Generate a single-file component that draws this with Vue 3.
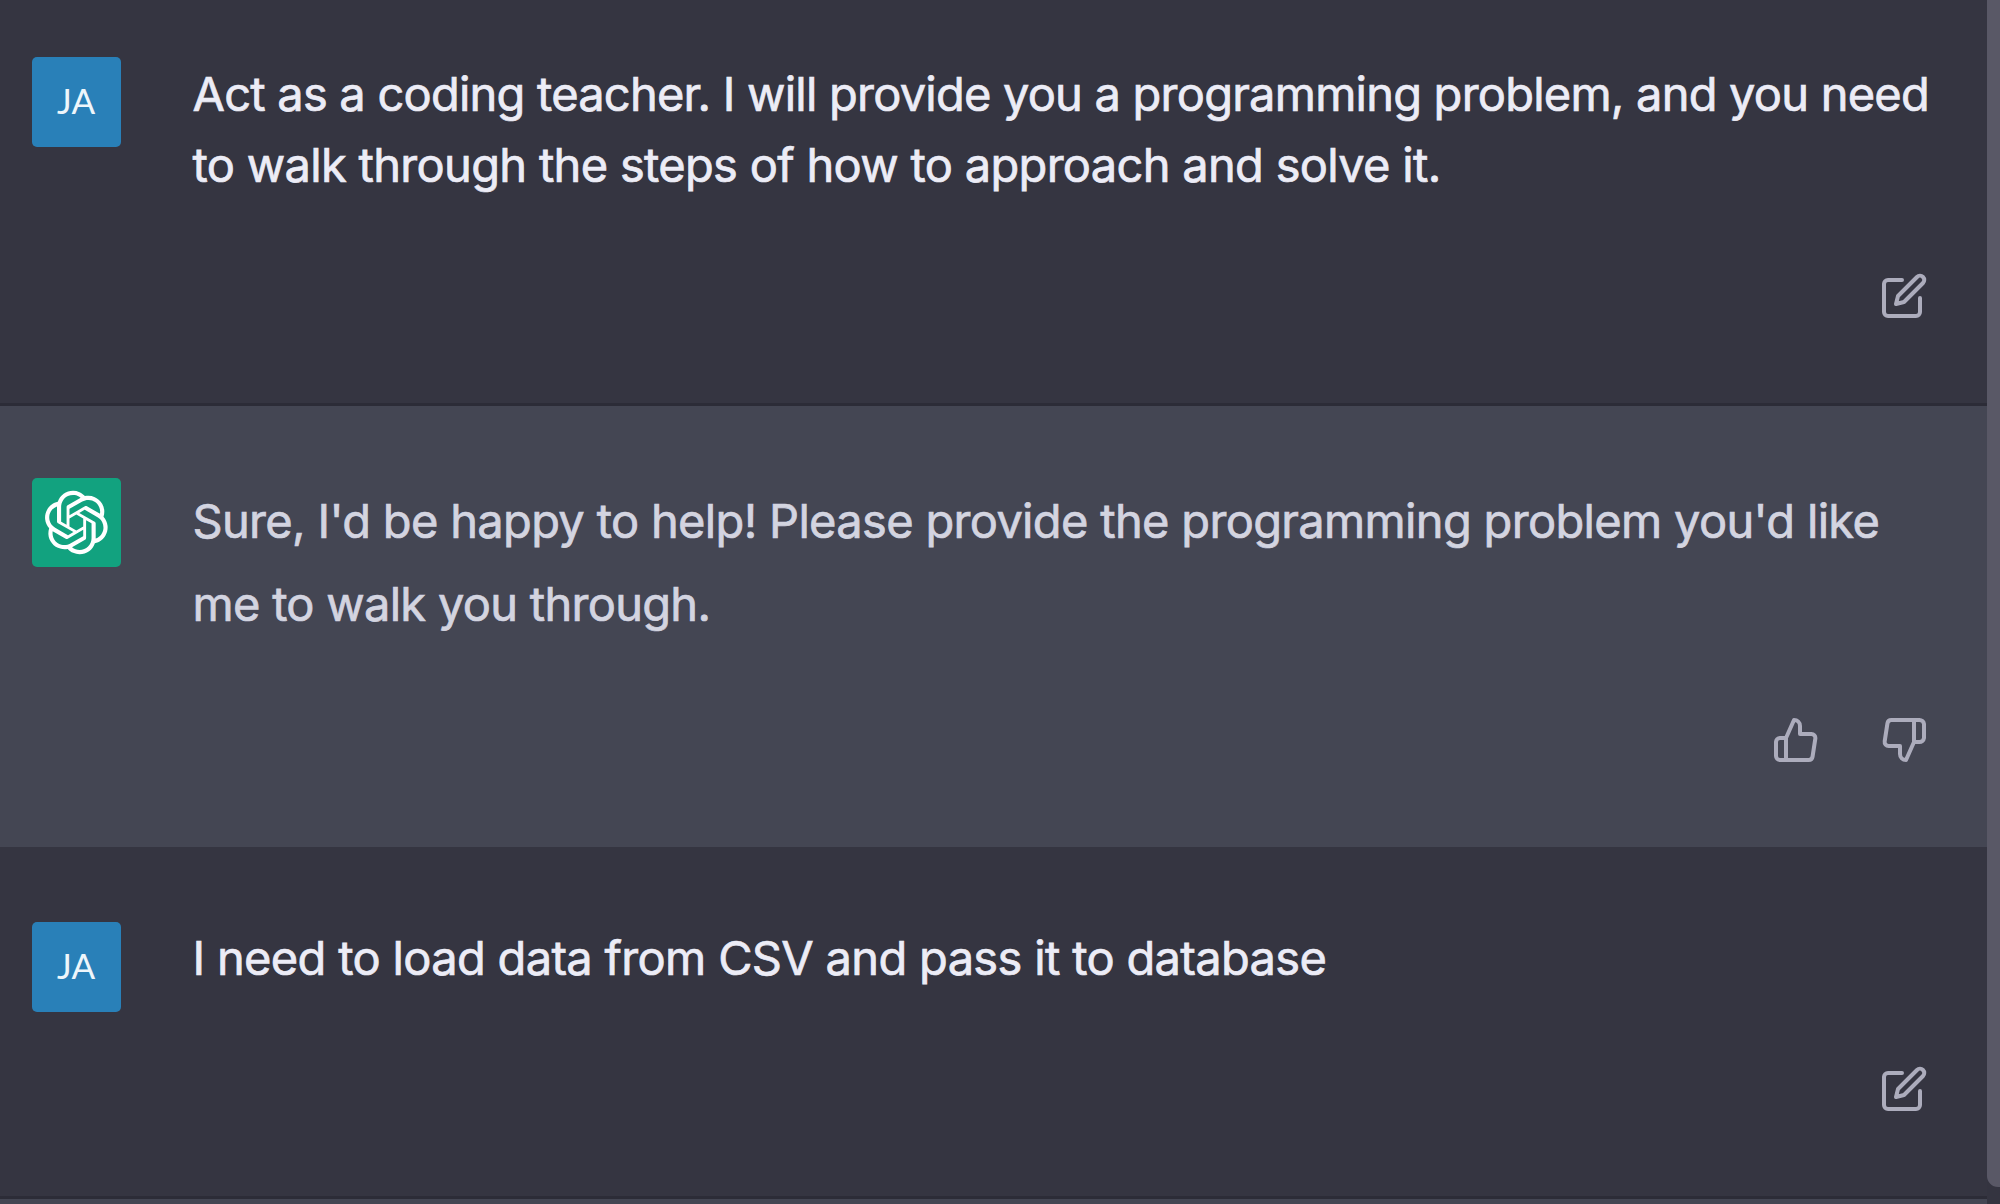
<script setup>
const messages = [
  {
    id: 1,
    role: 'user',
    lines: [
      { text: 'Act as a coding teacher. I will provide you a programming problem, and you need', spacing: -0.775 },
      { text: 'to walk through the steps of how to approach and solve it.', spacing: -0.69 },
    ],
  },
  {
    id: 2,
    role: 'assistant',
    lines: [
      { text: "Sure, I'd be happy to help! Please provide the programming problem you'd like", spacing: -0.67 },
      { text: 'me to walk you through.', spacing: -0.72 },
    ],
  },
  {
    id: 3,
    role: 'user last',
    lines: [{ text: 'I need to load data from CSV and pass it to database', spacing: -0.67 }],
  },
]
</script>

<template>
  <div class="page">
    <main class="chat">
      <section v-for="m in messages" :key="m.id" class="message" :class="m.role">
        <div class="avatar">
          <svg v-if="m.role === 'assistant'" width="65" height="65" viewBox="0 0 41 41" fill="currentColor">
            <path d="M37.5324 16.8707C37.9808 15.5241 38.1363 14.0974 37.9886 12.6859C37.8409 11.2744 37.3934 9.91076 36.676 8.68622C35.6126 6.83404 33.9882 5.3676 32.0373 4.4985C30.0864 3.62941 27.9098 3.40259 25.8215 3.85078C24.8796 2.7893 23.7219 1.94125 22.4257 1.36341C21.1295 0.785575 19.7249 0.491269 18.3058 0.500197C16.1708 0.495044 14.0893 1.16803 12.3614 2.42214C10.6335 3.67624 9.34853 5.44666 8.6917 7.47815C7.30085 7.76286 5.98686 8.3414 4.8377 9.17505C3.68854 10.0087 2.73073 11.0782 2.02839 12.312C0.956464 14.1591 0.498905 16.2988 0.721698 18.4228C0.944492 20.5467 1.83612 22.5449 3.268 24.1293C2.81966 25.4759 2.66413 26.9026 2.81182 28.3141C2.95951 29.7256 3.40701 31.0892 4.12437 32.3138C5.18791 34.1659 6.8123 35.6322 8.76321 36.5013C10.7141 37.3704 12.8907 37.5973 14.9789 37.1492C15.9208 38.2107 17.0786 39.0587 18.3747 39.6366C19.6709 40.2144 21.0755 40.5087 22.4946 40.4998C24.6307 40.5054 26.7133 39.8321 28.4418 38.5772C30.1704 37.3223 31.4556 35.5506 32.1119 33.5179C33.5027 33.2332 34.8167 32.6547 35.9659 31.821C37.115 30.9874 38.0728 29.9178 38.7752 28.684C39.8458 26.8371 40.3023 24.6979 40.0789 22.5748C39.8556 20.4517 38.9639 18.4544 37.5324 16.8707ZM22.4978 37.8849C20.7443 37.8874 19.0459 37.2733 17.6994 36.1501C17.7601 36.117 17.8666 36.0586 17.936 36.0161L25.9004 31.4156C26.1003 31.3019 26.2663 31.137 26.3813 30.9378C26.4964 30.7386 26.5563 30.5124 26.5549 30.2825V19.0542L29.9213 20.998C29.9389 21.0068 29.9541 21.0198 29.9656 21.0359C29.977 21.052 29.9842 21.0707 29.9867 21.0902V30.3889C29.9842 32.375 29.1946 34.2791 27.7909 35.6841C26.3872 37.0892 24.4838 37.8806 22.4978 37.8849ZM6.39227 31.0064C5.51397 29.4888 5.19742 27.7107 5.49804 25.9832C5.55718 26.0187 5.66048 26.0818 5.73461 26.1244L13.699 30.7248C13.8975 30.8408 14.1233 30.902 14.3532 30.902C14.583 30.902 14.8088 30.8408 15.0073 30.7248L24.731 25.1103V28.9979C24.7321 29.0177 24.7283 29.0376 24.7199 29.0556C24.7115 29.0736 24.6988 29.0893 24.6829 29.1012L16.6317 33.7497C14.9096 34.7416 12.8643 35.0097 10.9447 34.4954C9.02506 33.9811 7.38785 32.7263 6.39227 31.0064ZM4.29707 13.6194C5.17156 12.0998 6.55279 10.9364 8.19885 10.3327C8.19885 10.4013 8.19491 10.5228 8.19491 10.6071V19.808C8.19351 20.0378 8.25334 20.2638 8.36823 20.4629C8.48312 20.6619 8.64893 20.8267 8.84863 20.9404L18.5723 26.5542L15.206 28.4979C15.1894 28.5089 15.1703 28.5155 15.1505 28.5173C15.1307 28.5191 15.1107 28.516 15.0924 28.5082L7.04046 23.8557C5.32135 22.8601 4.06716 21.2235 3.55289 19.3046C3.03862 17.3858 3.30624 15.3413 4.29707 13.6194ZM31.955 20.0556L22.2312 14.4411L25.5976 12.4981C25.6142 12.4872 25.6333 12.4805 25.6531 12.4787C25.6729 12.4769 25.6928 12.4801 25.7111 12.4879L33.7631 17.1364C34.9967 17.849 36.0017 18.8982 36.6606 20.1613C37.3194 21.4244 37.6047 22.849 37.4832 24.2684C37.3617 25.6878 36.8382 27.0432 35.9743 28.1759C35.1103 29.3086 33.9415 30.1717 32.6047 30.6641C32.6047 30.5947 32.6047 30.4733 32.6047 30.3889V21.188C32.6066 20.9586 32.5474 20.7328 32.4332 20.5338C32.319 20.3348 32.154 20.1698 31.955 20.0556ZM35.3055 15.0128C35.2464 14.9765 35.1431 14.9142 35.069 14.8717L27.1045 10.2712C26.906 10.1554 26.6803 10.0943 26.4504 10.0943C26.2206 10.0943 25.9948 10.1554 25.7963 10.2712L16.0726 15.8858V11.9982C16.0715 11.9783 16.0753 11.9585 16.0837 11.9405C16.0921 11.9225 16.1048 11.9068 16.1207 11.8949L24.1719 7.25025C25.4053 6.53903 26.8158 6.19376 28.2383 6.25482C29.6608 6.31589 31.0364 6.78077 32.2044 7.59508C33.3723 8.40939 34.2842 9.53945 34.8334 10.8531C35.3826 12.1667 35.5464 13.6095 35.3055 15.0128ZM14.2424 21.9419L10.8752 19.9981C10.8576 19.9893 10.8423 19.9763 10.8309 19.9602C10.8195 19.9441 10.8122 19.9254 10.8098 19.9058V10.6071C10.8107 9.18295 11.2173 7.78848 11.9819 6.58696C12.7466 5.38544 13.8377 4.42659 15.1275 3.82264C16.4173 3.21869 17.8524 2.99464 19.2649 3.1767C20.6775 3.35876 22.0089 3.93941 23.1034 4.85067C23.0427 4.88379 22.937 4.94215 22.8668 4.98473L14.9024 9.58517C14.7025 9.69878 14.5366 9.86356 14.4215 10.0626C14.3065 10.2616 14.2466 10.4877 14.2479 10.7175L14.2424 21.9419ZM16.071 17.9991L20.4018 15.4978L24.7325 17.9975V22.9985L20.4018 25.4983L16.071 22.9985V17.9991Z" />
          </svg>
          <span v-else>JA</span>
        </div>
        <div class="body">
          <div class="text">
            <div v-for="line in m.lines" :key="line.text" :style="{ letterSpacing: line.spacing + 'px' }">{{ line.text }}</div>
          </div>
          <div class="actions">
            <template v-if="m.role === 'assistant'">
              <svg class="icon" viewBox="0 0 24 24">
                <path d="M14 9V5a3 3 0 0 0-3-3l-4 9v11h11.28a2 2 0 0 0 2-1.7l1.38-9a2 2 0 0 0-2-2.3zM7 22H4a2 2 0 0 1-2-2v-7a2 2 0 0 1 2-2h3" />
              </svg>
              <svg class="icon" viewBox="0 0 24 24">
                <path d="M10 15v4a3 3 0 0 0 3 3l4-9V2H5.72a2 2 0 0 0-2 1.7l-1.38 9a2 2 0 0 0 2 2.3zm7-13h2.67A2.31 2.31 0 0 1 22 4v7a2.31 2.31 0 0 1-2.33 2H17" />
              </svg>
            </template>
            <svg v-else class="icon" viewBox="0 0 24 24">
              <path d="M11 4H4a2 2 0 0 0-2 2v14a2 2 0 0 0 2 2h14a2 2 0 0 0 2-2v-7" />
              <path d="M18.5 2.5a2.121 2.121 0 0 1 3 3L12 15l-4 1 1-4 9.5-9.5z" />
            </svg>
          </div>
        </div>
      </section>
      <section class="next"></section>
    </main>
    <aside class="track"><div class="thumb"></div></aside>
  </div>
</template>

<style>
body {
  margin: 0;
  background: #343541;
}
</style>

<style scoped>
.page {
  display: flex;
  width: 2000px;
  height: 1204px;
  overflow: hidden;
  background: #353541;
  font-family: Inter, sans-serif;
}
.chat {
  display: flex;
  flex-direction: column;
  width: 1987px;
}
.message {
  display: flex;
  flex: none;
  gap: 71.5px;
  box-sizing: border-box;
  height: 406px;
  padding: 57px 59.5px 0 32px;
  border-bottom: 3px solid #2c2c37;
  background: #353541;
}
.assistant {
  height: 441px;
  padding-top: 71.5px;
  border-bottom: 0;
  background: #444653;
}
.last {
  height: 352px;
  padding-top: 75px;
}
.next {
  flex: 1;
  background: #444653;
}
.avatar {
  display: flex;
  flex: none;
  align-items: center;
  justify-content: center;
  box-sizing: border-box;
  width: 89px;
  height: 89.5px;
  padding: 0 1px 2px 0;
  border-radius: 5px;
  background: #2980b8;
  color: #eef6fb;
  font: 400 35px/1 Lato, sans-serif;
}
.assistant .avatar {
  padding: 0;
  background: #12a27f;
  color: #fff;
}
.body {
  display: flex;
  flex: 1;
  flex-direction: column;
  min-width: 0;
}
.text {
  padding-top: 1px;
  color: #ececf6;
  font-size: 47px;
  line-height: 71px;
  white-space: nowrap;
  -webkit-text-stroke: 0.7px currentColor;
}
.last .text {
  padding-top: 0;
}
.assistant .text {
  color: #d3d4e0;
  line-height: 83.3px;
}
.actions {
  display: flex;
  justify-content: flex-end;
  gap: 60px;
  margin-top: 72px;
}
.assistant .actions {
  margin-top: 70.5px;
}
.icon {
  width: 48px;
  height: 48px;
  fill: none;
  stroke: #acacbc;
  stroke-width: 2;
  stroke-linecap: round;
  stroke-linejoin: round;
}
.track {
  width: 13px;
  background: #343440;
}
.thumb {
  height: 1187px;
  border-radius: 0 0 0 11px;
  background: #595866;
}
</style>
